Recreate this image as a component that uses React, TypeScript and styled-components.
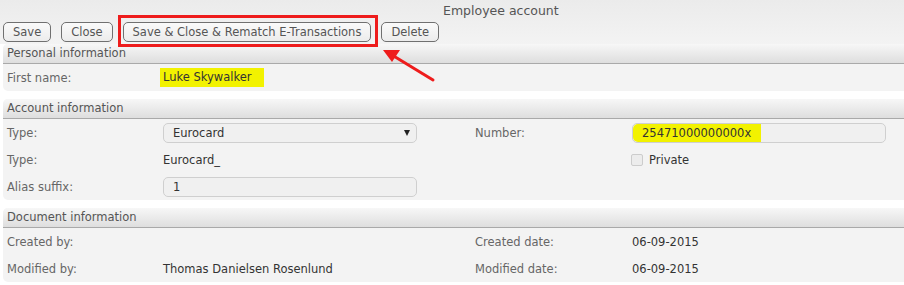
import React from "react";
import styled, { createGlobalStyle } from "styled-components";

const Global = createGlobalStyle`
  html, body { margin: 0; padding: 0; background: #ffffff; overflow: hidden; }
  body { font-family: "DejaVu Sans", Verdana, sans-serif; font-size: 11.5px; color: #333; }
`;

const Page = styled.div`
  width: 904px;
  height: 285px;
  position: relative;
  overflow: hidden;
  background: #ffffff;
`;

const Top = styled.div`
  background: linear-gradient(#ebebeb, #f3f3f3);
  padding: 0 0 2px 3px;
`;

const Title = styled.div`
  height: 22px;
  line-height: 21px;
  font-size: 12.5px;
  color: #555;
  padding-left: 440px;
`;

const Toolbar = styled.div`
  display: flex;
  align-items: center;
  gap: 10px;
  height: 20px;
`;

const Button = styled.button`
  box-sizing: border-box;
  height: 20px;
  padding: 0 9px;
  font-family: "DejaVu Sans", Verdana, sans-serif;
  font-size: 11.5px;
  color: #555;
  border: 1px solid #707070;
  border-radius: 5px;
  background: linear-gradient(#fafafa, #ececec);
  line-height: 17px;
  cursor: pointer;
`;

const Highlighted = styled.div`
  position: relative;
  display: flex;
`;

const RedBox = styled.div`
  position: absolute;
  left: -5px;
  right: -7px;
  top: -7px;
  bottom: -5px;
  border: 3px solid #ee1c1c;
  box-sizing: border-box;
  pointer-events: none;
`;

const Arrow = styled.svg`
  position: absolute;
  left: 378px;
  top: 43px;
  pointer-events: none;
`;

const Section = styled.section<{ $gap?: boolean }>`
  margin: ${(p) => (p.$gap ? "8px" : "0")} -6px 0 3px;
  border-radius: 5px;
  overflow: hidden;
  background: #f3f3f3;
`;

const SectionHeader = styled.div`
  height: 19px;
  line-height: 19px;
  padding-left: 4px;
  color: #555;
  background: linear-gradient(#f7f7f7, #dedede);
  border-bottom: 1px solid #a9a9a9;
`;

const Body = styled.div`
  display: grid;
  grid-template-columns: 156px 312px 157px 1fr;
  grid-auto-rows: 27px;
  padding-left: 4px;
`;

const Label = styled.div`
  display: flex;
  align-items: center;
  color: #666;
`;

const Value = styled.div`
  display: flex;
  align-items: center;
  color: #333;
`;

const Mark = styled.span`
  background: #f2f200;
  padding: 0 12px 0 3px;
  margin-left: -3px;
  line-height: 19px;
`;

const Field = styled.div<{ $w?: number }>`
  box-sizing: border-box;
  width: ${(p) => p.$w ?? 254}px;
  height: 20px;
  border: 1px solid #cfcfcf;
  border-radius: 5px;
  background: #f0f0f0;
  display: flex;
  align-items: center;
  padding-left: 9px;
  color: #333;
  position: relative;
`;

const FieldMark = styled.span`
  position: absolute;
  left: 0;
  top: 0;
  bottom: 0;
  width: 128px;
  background: #f2f200;
  border-radius: 5px 0 0 5px;
`;

const FieldText = styled.span`
  position: relative;
`;

const Caret = styled.span`
  position: absolute;
  right: 6px;
  top: 6px;
  width: 0;
  height: 0;
  border-left: 3px solid transparent;
  border-right: 3px solid transparent;
  border-top: 6px solid #222;
`;

const Check = styled.span`
  box-sizing: border-box;
  width: 12px;
  height: 12px;
  border: 1px solid #cccccc;
  border-radius: 2px;
  background: #ececec;
  margin: 0 6px 0 -1px;
`;

export default function App() {
  return (
    <Page>
      <Global />
      <Top>
        <Title>Employee account</Title>
        <Toolbar>
          <Button>Save</Button>
          <Button>Close</Button>
          <Highlighted>
            <Button>Save &amp; Close &amp; Rematch E-Transactions</Button>
            <RedBox />
          </Highlighted>
          <Button>Delete</Button>
        </Toolbar>
      </Top>
      <Arrow width="60" height="42" viewBox="0 0 60 42">
        <line x1="55" y1="37" x2="14" y2="12" stroke="#ee1c1c" strokeWidth="3" strokeLinecap="round" />
        <polygon points="5,7 22,7 14,19" fill="#ee1c1c" />
      </Arrow>

      <Section>
        <SectionHeader>Personal information</SectionHeader>
        <Body>
          <Label>First name:</Label>
          <Value><Mark>Luke Skywalker</Mark></Value>
        </Body>
      </Section>

      <Section $gap>
        <SectionHeader>Account information</SectionHeader>
        <Body>
          <Label>Type:</Label>
          <Value>
            <Field>Eurocard<Caret /></Field>
          </Value>
          <Label>Number:</Label>
          <Value>
            <Field $w={254}>
              <FieldMark />
              <FieldText>25471000000000x</FieldText>
            </Field>
          </Value>
          <Label>Type:</Label>
          <Value>Eurocard_</Value>
          <Label />
          <Value><Check />Private</Value>
          <Label>Alias suffix:</Label>
          <Value><Field>1</Field></Value>
          <Label />
          <Value />
        </Body>
      </Section>

      <Section $gap>
        <SectionHeader>Document information</SectionHeader>
        <Body>
          <Label>Created by:</Label>
          <Value />
          <Label>Created date:</Label>
          <Value>06-09-2015</Value>
          <Label>Modified by:</Label>
          <Value>Thomas Danielsen Rosenlund</Value>
          <Label>Modified date:</Label>
          <Value>06-09-2015</Value>
        </Body>
      </Section>
    </Page>
  );
}
